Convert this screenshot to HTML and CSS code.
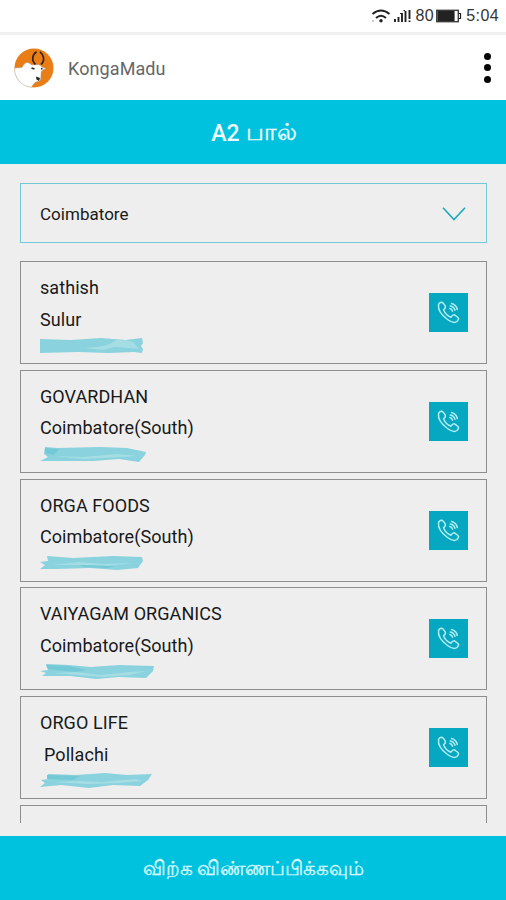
FILE: index.html
```html
<!DOCTYPE html>
<html lang="ta">
<head>
<meta charset="utf-8">
<title>KongaMadu</title>
<link rel="stylesheet" href="styles.css">
</head>
<body>
<svg class="defs" width="0" height="0" aria-hidden="true">
  <symbol id="call" viewBox="0 0 39 39">
    <path d="M9.500 11.800Q10 9.500 12.700 9.200Q14.200 9.300 16.300 13.200Q17 14.800 14.500 16.800C15.800 20.200 18.500 22.800 21.800 24.200Q24 21.300 25.500 21.800L29 24.500Q30.500 26 28 28.500Q24.500 31 18.500 26.500Q8.500 19 9.500 11.800Z"/>
    <path d="M20.800 15.500Q23 15.800 23.500 18.200M21.200 13Q25 13.500 26 17.200M22.500 10.500Q27.500 12 28.300 16.500"/>
  </symbol>
</svg>
<div class="app">
  <div class="status">
    <svg class="wifi" viewBox="0 0 20 14"><path d="M1.500 5Q10-2 18.500 5M5 9Q10 4.500 15 9"/><circle class="dot" cx="10" cy="11.800" r="1.700"/><circle class="faint" cx="2" cy="12" r="1"/></svg>
    <svg class="signal" viewBox="0 0 17 14"><path d="M1 13V10M4.500 13V8M8 13V4M11.500 13V2M15.500 10V1M15.500 13V11.500"/><path class="thin" d="M6 4.500H8M9.500 1.500H11"/></svg>
    <span class="level">80</span>
    <svg class="battery" viewBox="0 0 26 14"><rect class="case" x=".75" y="1.250" width="21.500" height="11.500"/><rect x="2" y="2.500" width="16" height="9"/><path d="M22.500 4.500H24.500V9.500H22.500"/></svg>
    <span class="time">5:04</span>
  </div>
  <header class="bar">
    <svg class="logo" viewBox="0 0 40 40">
      <circle cx="20" cy="20" r="19.500" fill="#e97d16"/>
      <path d="M.6 20L8 19.500Q10 15 13 14.500Q16 14.500 17.500 17L21 16.500L26 17L28 19L32 20.500L29 22Q26.500 23 27 28L26.500 32Q24.500 34 23.500 33.500Q20 34 17.500 39.300Q8 38.500 3 30Q0 25 .6 20Z" fill="#fff" stroke="#a89b8d" stroke-width=".5"/>
      <path d="M21.500 16.500C17 12.500 18.500 6.500 22.500 3.800M27 16.500C31.500 12.500 29.500 6.500 26 3.800" fill="none" stroke="#382014" stroke-width="1.700"/>
      <path d="M17.500 20L20.500 21M27 20.500L28.500 21" stroke="#222" stroke-width="1.600"/>
      <path d="M22 28.500L26 30L25 33L22.500 31.500Z" fill="#222"/>
    </svg>
    <span class="brand">KongaMadu</span>
    <span class="more"><i></i><i></i><i></i></span>
  </header>
  <h1 class="title"><span>A2</span> <span class="ta">பால்</span></h1>
  <main class="content">
    <div class="select"><span>Coimbatore</span><svg viewBox="0 0 24 14"><path d="M1 .8L12 12.500L23 .8"/></svg></div>
    <div class="list">
      <article class="card"><div class="info"><p>sathish</p><p>Sulur</p>
        <svg class="smear" viewBox="0 0 120 18"><path d="M0 2L31 3L61 1L85 3L102 1L103 6L101 9L103 12L102 16L94 15L68 16L38 15L0 16Z"/><path class="light" d="M44 11Q67 10 73 5T93 5L99 12L75 10L63 13Z"/></svg></div>
        <span class="call"><svg><use href="#call"/></svg></span></article>
      <article class="card"><div class="info"><p>GOVARDHAN</p><p>Coimbatore(South)</p>
        <svg class="smear" viewBox="0 0 120 18"><path d="M5 1L18 2L60 1L87 2L106 6L105 9L99 16L79 13L53 15L0 15L8 11L4 8Z"/><path class="light" d="M12 10L43 11L77 8L98 10L81 11L44 13Z"/><path class="dark" d="M5 2L19 3L14 9L5 7Z"/></svg></div>
        <span class="call"><svg><use href="#call"/></svg></span></article>
      <article class="card"><div class="info"><p>ORGA FOODS</p><p>Coimbatore(South)</p>
        <svg class="smear" viewBox="0 0 120 18"><path d="M7 1L33 3L73 1L102 2L103 6L98 13L77 15L50 13L17 14L0 14L5 10L0 7L8 6Z"/><path class="light" d="M12 10L39 7L64 9L94 8L68 11L35 10Z"/><path class="dark" d="M40 10L75 11L67 13L44 12Z"/></svg></div>
        <span class="call"><svg><use href="#call"/></svg></span></article>
      <article class="card"><div class="info"><p>VAIYAGAM ORGANICS</p><p>Coimbatore(South)</p>
        <svg class="smear" viewBox="0 0 120 18"><path d="M6 1L29 2L51 4L79 2L114 3L113 8L106 15L79 14L56 16L30 13L2 13L6 10L0 8L8 7Z"/><path class="light" d="M14 10L36 9L61 12L90 9L107 8L89 12L63 14Z"/><path class="dark" d="M6 2L29 3L47 7L35 9L8 6Z"/></svg></div>
        <span class="call"><svg><use href="#call"/></svg></span></article>
      <article class="card"><div class="info"><p>ORGO LIFE</p><p class="indent">Pollachi</p>
        <svg class="smear" viewBox="0 0 120 18"><path d="M8 2L36 3L65 1L87 3L112 2L108 8L100 14L73 13L49 16L21 13L0 15L5 11L1 8L9 7Z"/><path class="light" d="M14 10L40 9L62 10L96 7L103 9L79 11L45 12Z"/><path class="dark" d="M7 3L40 4L33 8L7 7Z"/></svg></div>
        <span class="call"><svg><use href="#call"/></svg></span></article>
      <article class="card"></article>
    </div>
  </main>
  <footer class="apply">விற்க விண்ணப்பிக்கவும்</footer>
</div>
</body>
</html>
```

FILE: styles.css
```css
* { box-sizing: border-box; }
body { margin: 0; background: #eee; font-family: Roboto, "Noto Sans", sans-serif; color: #191919; }
.defs { display: block; }
.app { width: 506px; height: 900px; display: flex; flex-direction: column; overflow: hidden; }

.status { height: 35px; flex: none; background: #fff; border-bottom: 3px solid #f0f0f0; display: flex; align-items: center; justify-content: flex-end; padding-right: 7px; color: #343434; font: 16px "Liberation Sans", sans-serif; }
.status svg { height: 14px; fill: #222; stroke: #222; stroke-width: 1.9; }
.wifi { width: 20px; margin-right: 3px; }
.wifi path { fill: none; }
.wifi .dot { stroke: none; }
.wifi .faint { fill: #bbb; stroke: none; }
.signal { width: 17px; margin-right: 4px; }
.signal .thin { stroke-width: 1; }
.level { letter-spacing: .5px; margin-right: 2px; }
.battery { width: 26px; margin-right: 4px; }
.status .battery { stroke-width: 1.2; }
.battery .case, .battery path { fill: none; }
.time { letter-spacing: .4px; }

.bar { height: 65px; flex: none; background: #fff; display: flex; align-items: center; padding: 0 15px 0 14px; }
.logo { width: 40px; height: 40px; }
.brand { margin-left: 14px; padding-top: 1px; font-size: 18px; letter-spacing: .1px; color: #666; flex: 1; }
.more { display: flex; flex-direction: column; gap: 4.5px; }
.more i { width: 7px; height: 7px; border-radius: 50%; background: #050505; }

.title { height: 64px; flex: none; margin: 0; background: #00c2df; color: #effcff; display: flex; align-items: center; justify-content: center; gap: 6px; font-size: 23px; font-weight: 500; padding: 2px 0 0 2px; }
.title .ta { font-size: 23.5px; -webkit-text-stroke: .4px #effcff; }

.content { flex: 1; min-height: 0; padding: 19px 19px 13px 20px; display: flex; flex-direction: column; }
.select { height: 60px; flex: none; border: 1.5px solid #73c9d6; padding: 1px 20px 0 19px; display: flex; align-items: center; justify-content: space-between; font-size: 17px; letter-spacing: .02px; margin-bottom: 18px; }
.select svg { width: 24px; height: 14px; fill: none; stroke: #1ba9bc; stroke-width: 1.6; }
.list { flex: 1; min-height: 0; overflow: hidden; display: flex; flex-direction: column; gap: 5.8px; }
.card { height: 103px; flex: none; border: 1px solid #8d8d8d; padding: 10px 18px 0 19px; display: flex; justify-content: space-between; }
.info p { margin: 0; height: 31.5px; line-height: 31.5px; font-size: 18px; letter-spacing: .07px; white-space: pre; }
.info .indent { padding-left: 4px; }
.smear { display: block; width: 120px; height: 18px; margin-top: 2px; fill: #8ad2dd; filter: blur(.6px); }
.smear .light { fill: #a5dde5; }
.smear .dark { fill: #74c9d6; }
.call { width: 39px; height: 39px; margin-top: 21px; background: #06a7c0; }
.call svg { display: block; width: 39px; height: 39px; fill: none; stroke: #b1edf2; stroke-width: 1.5; stroke-linejoin: round; stroke-linecap: round; }

.apply { height: 64px; flex: none; background: #00c2df; color: #d9f8fc; display: flex; align-items: center; justify-content: center; font-size: 19.6px; -webkit-text-stroke: .35px #d9f8fc; padding: 2px 0 0 1px; }
```
